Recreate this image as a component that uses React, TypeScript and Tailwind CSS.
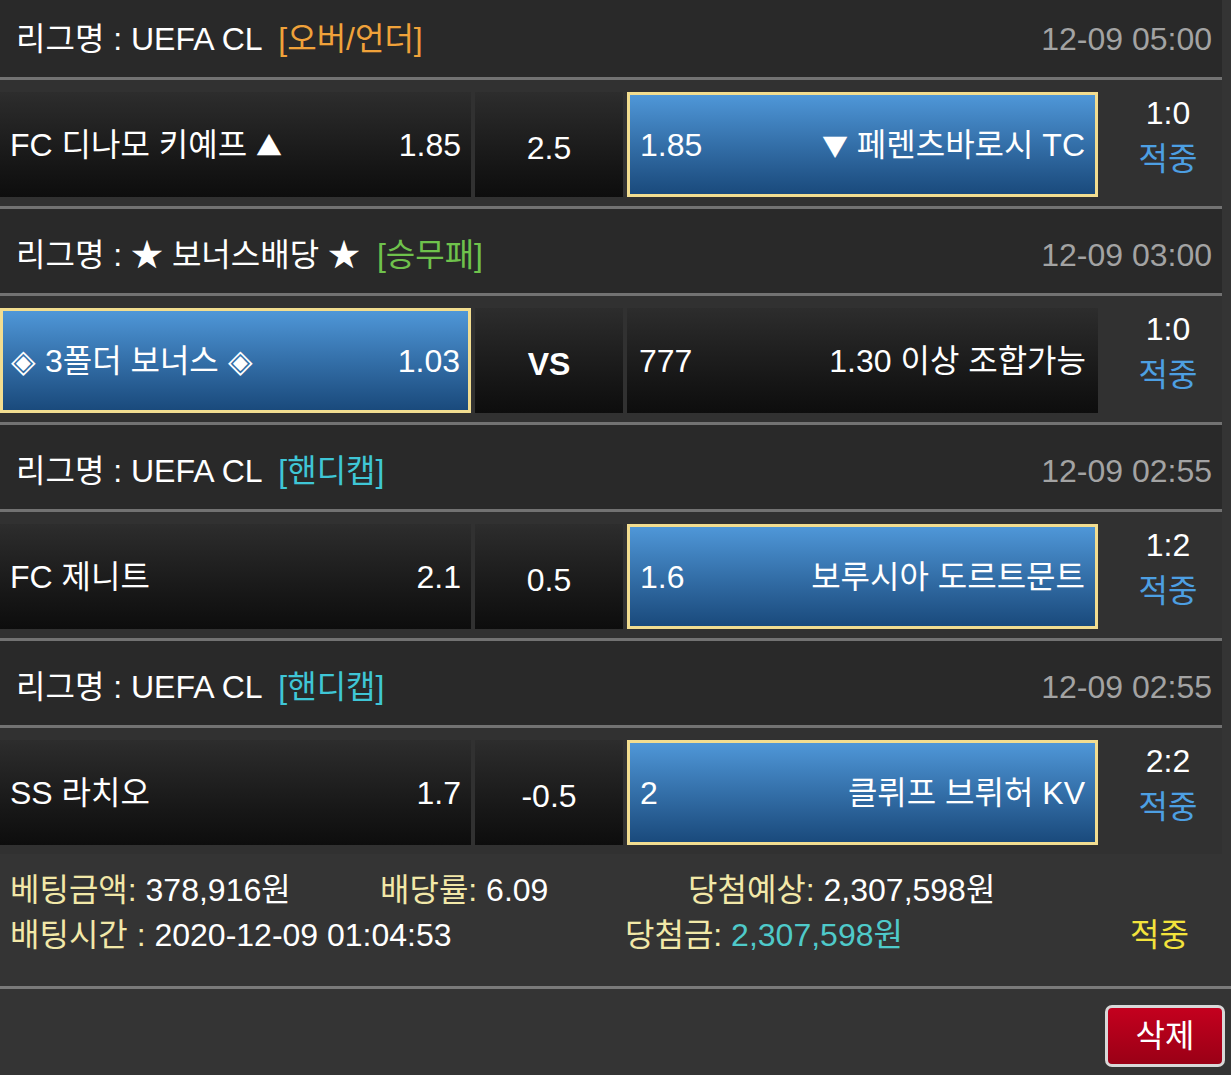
import React from "react";

type Side = { name: React.ReactNode; odds: string };

const Tri = ({ c }: { c: string }) => (
  <span className="text-[26px] leading-none" style={{ fontFamily: "'Noto Sans CJK KR', sans-serif" }}>
    {c}
  </span>
);

const BETS = [
  {
    league: "UEFA CL",
    tag: "[오버/언더]",
    tagColor: "text-[#f0a23a]",
    time: "12-09 05:00",
    home: { name: <>FC 디나모 키예프 <Tri c="▲" /></>, odds: "1.85" },
    mid: "2.5",
    away: { name: <><Tri c="▼" /> 페렌츠바로시 TC</>, odds: "1.85" },
    pick: "away",
    score: "1:0",
  },
  {
    league: "★ 보너스배당 ★",
    tag: "[승무패]",
    tagColor: "text-[#6fc24c]",
    time: "12-09 03:00",
    home: { name: "◈ 3폴더 보너스 ◈", odds: "1.03" },
    mid: "VS",
    away: { name: "1.30 이상 조합가능", odds: "777" },
    pick: "home",
    score: "1:0",
  },
  {
    league: "UEFA CL",
    tag: "[핸디캡]",
    tagColor: "text-[#3fc6d6]",
    time: "12-09 02:55",
    home: { name: "FC 제니트", odds: "2.1" },
    mid: "0.5",
    away: { name: "보루시아 도르트문트", odds: "1.6" },
    pick: "away",
    score: "1:2",
  },
  {
    league: "UEFA CL",
    tag: "[핸디캡]",
    tagColor: "text-[#3fc6d6]",
    time: "12-09 02:55",
    home: { name: "SS 라치오", odds: "1.7" },
    mid: "-0.5",
    away: { name: "클뤼프 브뤼허 KV", odds: "2" },
    pick: "away",
    score: "2:2",
  },
];

const DARK = "bg-linear-to-b from-[#2d2d2d] to-[#0d0d0d]";
const BLUE = "bg-linear-to-b from-[#4f97d8] to-[#1a4a7c] border-[3px] border-[#f2dd90]";

function HomeCell({ side, picked }: { side: Side; picked: boolean }) {
  return (
    <div
      className={`flex h-[105px] w-[471px] items-center justify-between ${
        picked ? `${BLUE} pl-[8px] pr-[8px]` : `${DARK} pl-[10px] pr-[10px]`
      }`}
    >
      <span>{side.name}</span>
      <span>{side.odds}</span>
    </div>
  );
}

function AwayCell({ side, picked }: { side: Side; picked: boolean }) {
  return (
    <div
      className={`flex h-[105px] w-[471px] items-center justify-between ${
        picked ? `${BLUE} pl-[10px] pr-[10px]` : `${DARK} pl-[12px] pr-[12px]`
      }`}
    >
      <span>{side.odds}</span>
      <span>{side.name}</span>
    </div>
  );
}

export default function App() {
  return (
    <div
      className="min-h-screen overflow-hidden bg-[#343434] text-[32px] text-white"
      style={{ fontFamily: "'Liberation Sans', 'Noto Sans CJK KR', sans-serif" }}
    >
      <div className="w-[1222px]">
        {BETS.map((b, i) => (
          <div key={i}>
            <div
              className={`flex h-[87px] items-center justify-between border-b-[3px] border-[#727272] bg-[#292929] pl-[16px] pr-[10px] pt-2 ${
                i === 0 ? "-mt-[7px]" : ""
              }`}
            >
              <span>
                리그명 : {b.league} <span className={`ml-[8px] ${b.tagColor}`}>{b.tag}</span>
              </span>
              <span className="text-[#a3a3a3]">{b.time}</span>
            </div>
            <div
              className={`flex gap-[4px] bg-[#313131] pt-[12px] ${
                i < BETS.length - 1 ? "h-[129px] border-b-[3px] border-[#727272]" : "h-[126px]"
              }`}
            >
              <HomeCell side={b.home} picked={b.pick === "home"} />
              <div
                className={`flex h-[105px] w-[148px] items-center justify-center pt-[6px] ${DARK} ${
                  b.mid === "VS" ? "font-bold" : ""
                }`}
              >
                {b.mid}
              </div>
              <AwayCell side={b.away} picked={b.pick === "away"} />
              <div className="-mt-[2px] flex flex-1 flex-col items-center pl-[12px] leading-[46px]">
                <span>{b.score}</span>
                <span className="text-[#4d9fe2]">적중</span>
              </div>
            </div>
          </div>
        ))}
      </div>

      <div className="h-[135px] border-b-[3px] border-[#7a7a7a] pl-[10px] pt-[14px] leading-[45px]">
        <div className="flex">
          <span className="w-[370px]">
            <span className="text-[#f2e8a8]">베팅금액:</span> 378,916원
          </span>
          <span className="w-[308px]">
            <span className="text-[#f2e8a8]">배당률:</span> 6.09
          </span>
          <span>
            <span className="text-[#f2e8a8]">당첨예상:</span> 2,307,598원
          </span>
        </div>
        <div className="flex">
          <span className="w-[615px]">
            <span className="text-[#f2e8a8]">배팅시간 :</span> 2020-12-09 01:04:53
          </span>
          <span className="w-[505px]">
            <span className="text-[#f2e8a8]">당첨금:</span>{" "}
            <span className="text-[#4fcaca]">2,307,598원</span>
          </span>
          <span className="text-[#f3e33c]">적중</span>
        </div>
      </div>

      <div className="flex justify-end pr-[6px] pt-[16px]">
        <button className="flex h-[62px] w-[120px] items-center justify-center rounded-[7px] border-[3px] border-[#d8d8d8] bg-linear-to-b from-[#c4001e] to-[#9a0016] text-white">
          삭제
        </button>
      </div>
    </div>
  );
}
